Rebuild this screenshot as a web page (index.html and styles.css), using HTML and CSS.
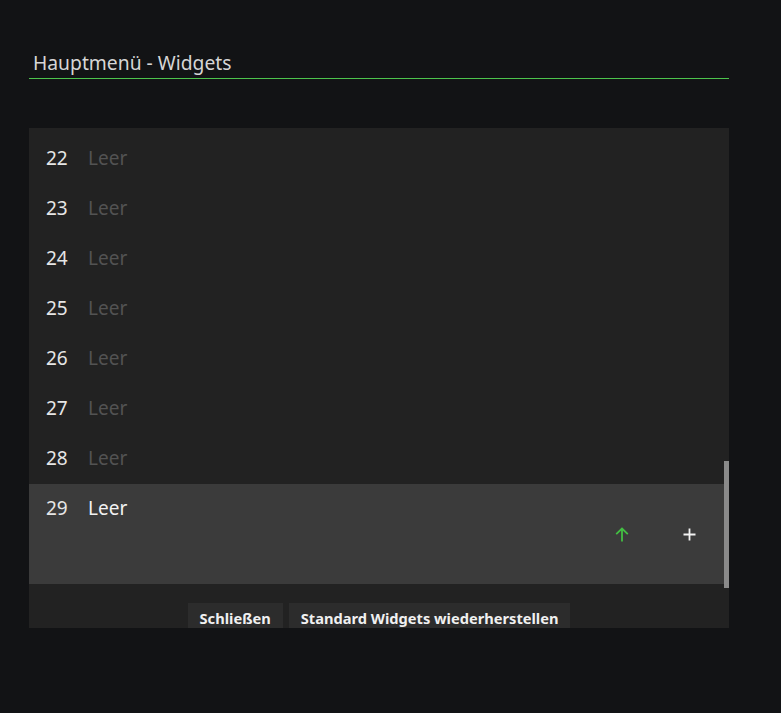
FILE: index.html
```html
<!DOCTYPE html>
<html lang="de">
<head>
    <meta charset="UTF-8">
    <meta name="viewport" content="width=device-width, initial-scale=1.0">
    <title>Hauptmenü - Widgets</title>
    <link rel="stylesheet" href="styles.css">
</head>
<body>
    <div class="dialog">
        <h1 class="dialog-title">Hauptmenü - Widgets</h1>

        <div class="panel">
            <ul class="widget-list">
                <li class="widget-row"><span class="num">22</span><span class="label">Leer</span></li>
                <li class="widget-row"><span class="num">23</span><span class="label">Leer</span></li>
                <li class="widget-row"><span class="num">24</span><span class="label">Leer</span></li>
                <li class="widget-row"><span class="num">25</span><span class="label">Leer</span></li>
                <li class="widget-row"><span class="num">26</span><span class="label">Leer</span></li>
                <li class="widget-row"><span class="num">27</span><span class="label">Leer</span></li>
                <li class="widget-row"><span class="num">28</span><span class="label">Leer</span></li>
                <li class="widget-row selected">
                    <div class="row-main"><span class="num">29</span><span class="label">Leer</span></div>
                    <div class="row-actions">
                        <span class="icon-btn up">
                            <svg width="14" height="15" viewBox="0 0 14 15"><path d="M7 14.5V1.5M1.2 7.2L7 1.5l5.8 5.7" fill="none" stroke="#43bf43" stroke-width="1.8"/></svg>
                        </span>
                        <span class="icon-btn add">
                            <svg width="13" height="13" viewBox="0 0 13 13"><path d="M6.5 0.5v12M0.5 6.5h12" fill="none" stroke="#f2f2f2" stroke-width="1.8"/></svg>
                        </span>
                    </div>
                </li>
            </ul>

            <div class="footer">
                <button class="btn">Schließen</button>
                <button class="btn">Standard Widgets wiederherstellen</button>
            </div>

            <div class="scrollbar"></div>
        </div>
    </div>
</body>
</html>
```

FILE: styles.css
```css
body {
    margin: 0;
    background: #121315;
    font-family: "Noto Sans", "Open Sans", sans-serif;
    color: #e4e4e4;
}
.dialog {
    width: 700px;
    padding-left: 29px;
}
.dialog-title {
    margin: 0;
    padding: 49px 0 2px 4px;
    font-size: 19.3px;
    font-weight: normal;
    line-height: 27px;
    color: #d6d6d6;
    border-bottom: 1px solid #4cc34c;
}
.panel {
    position: relative;
    margin-top: 49px;
    background: #222222;
}
.widget-list {
    list-style: none;
    margin: 0;
    padding: 6px 0 0;
}
.widget-row {
    height: 50px;
    padding: 5px 0 0 17px;
    box-sizing: border-box;
    display: flex;
    line-height: 38px;
    font-size: 19px;
}
.widget-row .num {
    width: 42px;
    color: #e6e6e6;
}
.widget-row .label {
    color: #535353;
}
.widget-row.selected {
    display: block;
    height: 100px;
    background: #3b3b3b;
}
.row-main {
    display: flex;
}
.selected .label {
    color: #f2f2f2;
}
.row-actions {
    display: flex;
    justify-content: flex-end;
    gap: 27px;
    margin-top: -5px;
    padding-right: 20px;
    height: 24px;
}
.icon-btn {
    width: 40px;
    display: flex;
    align-items: center;
    justify-content: center;
}
.footer {
    display: flex;
    justify-content: center;
    gap: 6px;
    padding-top: 19px;
    margin-bottom: -5px;
}
.btn {
    height: 30px;
    padding: 0 12px;
    border: none;
    background: #2c2c2c;
    color: #f0f0f0;
    font-family: "Noto Sans", "Open Sans", sans-serif;
    font-size: 14.65px;
    font-weight: bold;
}
.scrollbar {
    position: absolute;
    right: 0;
    top: 333px;
    width: 5px;
    height: 127px;
    background: #8a8a8a;
}
```
